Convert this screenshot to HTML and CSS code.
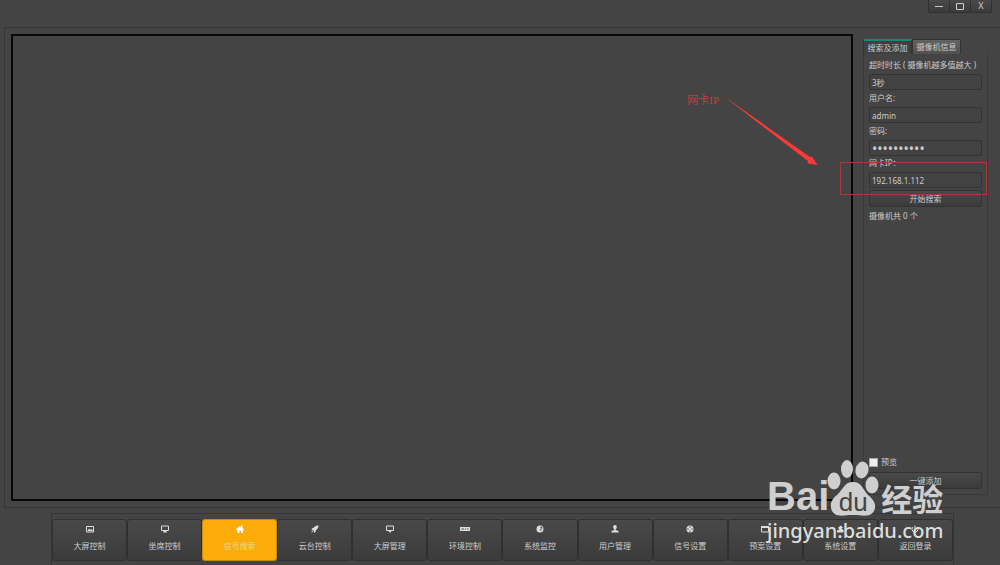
FILE: index.html
```html
<!DOCTYPE html>
<html lang="zh-CN">
<head>
    <meta charset="UTF-8">
    <title>信号搜索</title>
    <link rel="stylesheet" href="styles.css">
</head>
<body>

<header class="titlebar">
    <button type="button" aria-label="最小化"><svg viewBox="0 0 10 10"><path d="M1 5.500h8"/></svg></button>
    <button type="button" aria-label="最大化"><svg viewBox="0 0 10 10"><path d="M1.500 2.500h7v6h-7z"/></svg></button>
    <button type="button" aria-label="关闭">X</button>
</header>

<main class="frame">
    <section class="screen"></section>

    <aside class="panel">
        <div class="tabs" role="tablist">
            <button type="button" role="tab" class="tab active" aria-selected="true">搜索及添加</button>
            <button type="button" role="tab" class="tab" aria-selected="false">摄像机信息</button>
        </div>
        <form class="pane">
            <label for="timeout">超时时长 ( 摄像机越多值越大 )</label>
            <input type="text" id="timeout" value="3秒">

            <label for="username">用户名:</label>
            <input type="text" id="username" value="admin">

            <label for="password">密码:</label>
            <input type="password" id="password" value="admin12345">

            <div class="marked">
                <label for="ip">网卡IP：</label>
                <input type="text" id="ip" value="192.168.1.112">
            </div>

            <button type="button" class="btn">开始搜索</button>
            <p class="count">摄像机共 0 个</p>

            <label class="preview"><input type="checkbox">预览</label>
            <button type="button" class="btn">一键添加</button>
        </form>
    </aside>

    <div class="note">
        <span>网卡IP</span>
        <svg width="96" height="72" viewBox="0 0 96 72"><path d="M.5 0 L87 61 L89 60.500 L94.500 69 L84.500 67.500 L85.500 65.500z"/></svg>
    </div>
</main>

<nav class="menu">
    <button type="button">
        <svg viewBox="0 0 16 16"><path class="line" d="M1 3h14v11H1z"/><path d="M3 12l3-5 3 3 2-2 3 4z"/></svg>
        大屏控制
    </button>
    <button type="button">
        <svg viewBox="0 0 16 16"><path class="line" d="M1 2h14v9H1z"/><path d="M6 11h4v2h2v2H4v-2h2z"/></svg>
        坐席控制
    </button>
    <button type="button" class="current">
        <svg viewBox="0 0 16 16"><path d="M0 9l7-7 3 2V1h3v5l3 3v1h-2v6h-4v-4H7v4H3v-6H0z"/></svg>
        信号搜索
    </button>
    <button type="button">
        <svg viewBox="0 0 16 16"><path d="M15 1c-4 0-7 1-9 4L2 7l-1 3 3 0 2 3 0 3 3-2 1-4c3-2 5-5 5-9zM3 11l-3 4 4-1z"/></svg>
        云台控制
    </button>
    <button type="button">
        <svg viewBox="0 0 16 16"><path class="line" d="M1 2h14v9H1z"/><path d="M5 12h6l-3 4z"/></svg>
        大屏管理
    </button>
    <button type="button">
        <svg viewBox="0 0 16 16"><path fill-rule="evenodd" d="M-2 4h20v8H-2zM1 7v2h5V7zM8 7v2h2V7zM12 7v2h3V7z"/></svg>
        环境控制
    </button>
    <button type="button">
        <svg viewBox="0 0 16 16"><path fill-rule="evenodd" d="M8 1a7 7 0 1 0 0 14A7 7 0 1 0 8 1zM9 3c3 0 4 2 4 4H9zM7 9h5l-2 3z"/></svg>
        系统监控
    </button>
    <button type="button">
        <svg viewBox="0 0 16 16"><path d="M8 0c5 0 4 7 1.500 8v2l5.500 2v3H1v-3l5.500-2V8C4 7 3 0 8 0z"/></svg>
        用户管理
    </button>
    <button type="button">
        <svg viewBox="0 0 16 16"><path fill-rule="evenodd" d="M8 1a7 7 0 1 0 0 14A7 7 0 1 0 8 1zM6 3h4L8 6zM3 6l3 2-3 2zM13 6v4l-3-2zM8 10l2 3H6z"/></svg>
        信号设置
    </button>
    <button type="button">
        <svg viewBox="0 0 16 16"><path class="line" d="M1 3h14v11H1z"/><path d="M0 2h16v4H0z"/></svg>
        预案设置
    </button>
    <button type="button">
        <svg viewBox="0 0 16 16"><path d="M9 1l5 4-3 2 4 3v5H2v-4l5-2-3-3z"/></svg>
        系统设置
    </button>
    <button type="button">
        <svg viewBox="0 0 16 16"><path class="line" d="M4 4a6 6 0 1 0 8 0M8 1v7"/></svg>
        返回登录
    </button>
</nav>

<div class="watermark">
    <div class="brand">
        <span class="bai">Bai</span>
        <span class="paw">
            <svg viewBox="0 0 52 56">
                <ellipse cx="7" cy="21" rx="6.500" ry="8.500"/>
                <ellipse cx="20" cy="9" rx="6" ry="9"/>
                <ellipse cx="35" cy="10" rx="6.500" ry="8.500" transform="rotate(12 35 10)"/>
                <ellipse cx="45" cy="25" rx="6.500" ry="8.500"/>
                <path d="M26 22c9 0 10 8 15 13 6 5 9 10 6 16-4 7-12 4-21 4s-17 3-21-4c-3-7 0-12 5-16 6-5 7-13 16-13z"/>
            </svg>
            <span class="du">du</span>
        </span>
        <span class="jingyan">经验</span>
    </div>
    <div class="site">jingyan.baidu.com</div>
</div>

</body>
</html>
```

FILE: styles.css
```css
* {
    box-sizing: border-box;
}
body {
    margin: 0;
    height: 100vh;
    overflow: hidden;
    display: flex;
    flex-direction: column;
    position: relative;
    background: #444;
    color: #ccc;
    font-family: "Noto Sans", "Noto Sans CJK SC", sans-serif;
    font-size: 8px;
    line-height: 12px;
}
button, input {
    font: inherit;
    color: inherit;
    margin: 0;
}
button {
    padding: 0;
    border: 1px solid #333;
    border-radius: 2px;
    background: linear-gradient(#494949, #3b3b3b);
    white-space: nowrap;
}

/* Title bar */
.titlebar {
    display: flex;
    justify-content: flex-end;
    height: 27px;
    padding-right: 8px;
}
.titlebar button {
    width: 22px;
    height: 13px;
    margin-left: -1px;
    border-top: none;
    border-color: #303030;
    border-radius: 0 0 3px 3px;
    display: flex;
    align-items: center;
    justify-content: center;
    font-size: 9px;
}
.titlebar svg {
    width: 10px;
    height: 10px;
    fill: none;
    stroke: #ccc;
}

/* Main area */
.frame {
    flex: 1;
    min-height: 0;
    display: flex;
    gap: 10px;
    margin-left: 4px;
    padding: 6px 12px 6px 6px;
    border: 1px solid #363636;
    border-right: none;
    position: relative;
}
.screen {
    flex: 1;
    border: 2px solid #080808;
}
.panel {
    width: 125px;
    display: flex;
    flex-direction: column;
    padding: 5px 0 6px;
}
.tabs {
    display: flex;
    padding-right: 27px;
}
.tab {
    flex: 1;
    height: 15px;
    line-height: 12px;
    border-radius: 0;
    border-bottom: none;
    background: linear-gradient(#636363, #505050);
}
.tab.active {
    border-top: 2px solid #1d8575;
    background: #404040;
}
.pane {
    flex: 1;
    display: flex;
    flex-direction: column;
    padding: 4px 5px 5px;
    border: 1px solid #383838;
    border-top: none;
}
.pane label {
    display: block;
    height: 16px;
    line-height: 14px;
    white-space: nowrap;
}
.pane input[type="text"],
.pane input[type="password"] {
    display: block;
    width: 100%;
    height: 16px;
    padding: 0 2px;
    border: 1px solid #343434;
    border-radius: 2px;
    background: #424242;
}
.pane input + label {
    margin-top: 1px;
}
.pane input[type="password"] {
    font-size: 14px;
}
.btn {
    width: 100%;
    height: 17px;
    line-height: 14px;
    flex: none;
}
.marked {
    position: relative;
    margin-bottom: 2px;
}
.marked::after {
    content: "";
    position: absolute;
    top: 6px;
    left: -29px;
    right: -5px;
    height: 31px;
    border: 1px solid #a33b3b;
    pointer-events: none;
}
.count {
    margin: 3px 0 auto;
}
.pane .preview {
    display: flex;
    align-items: center;
    gap: 3px;
    margin-bottom: 2px;
}
.preview input {
    appearance: none;
    width: 9px;
    height: 9px;
    border: 1px solid #aaa;
    background: #eee;
}

/* Annotation drawn over the screen */
.note {
    position: absolute;
    top: 68px;
    right: 181px;
    display: flex;
    gap: 4px;
    color: #c83c3c;
    font-family: "Liberation Serif", "Noto Sans CJK SC", serif;
    font-size: 11px;
    line-height: 8px;
}
.note svg {
    fill: #ff3838;
}

/* Bottom menu */
.menu {
    display: flex;
    height: 52px;
    margin: 5px 46px 0 51px;
    padding-top: 5px;
    border: 1px solid #363636;
    border-bottom: none;
}
.menu button {
    flex: 1;
    height: 42px;
    display: flex;
    flex-direction: column;
    align-items: center;
    gap: 7px;
    padding-top: 5px;
    border-color: #303030;
    border-radius: 3px;
}
.menu button.current {
    background: #fcac08;
    border-color: #c98a0a;
    color: #e8d3a0;
}
.menu svg {
    width: 8px;
    height: 8px;
    fill: #ddd;
    overflow: visible;
}
.menu .current svg {
    fill: #fff;
}
.menu .line {
    fill: none;
    stroke: #ddd;
    stroke-width: 2;
}

/* Watermark */
.watermark {
    position: absolute;
    right: 54px;
    bottom: 19px;
    width: 179px;
    color: #cfcfcf;
    pointer-events: none;
}
.brand {
    display: flex;
    align-items: flex-end;
    font-weight: bold;
}
.bai {
    font-family: "Liberation Sans", sans-serif;
    font-size: 40px;
    line-height: 36px;
    padding-bottom: 2px;
}
.paw {
    position: relative;
    width: 52px;
    height: 56px;
    margin: 0 2px 0 -2px;
}
.paw svg {
    width: 52px;
    height: 56px;
    fill: #cfcfcf;
}
.du {
    position: absolute;
    left: 0;
    right: 0;
    bottom: 2px;
    text-align: center;
    color: #444;
    font-family: "Liberation Sans", sans-serif;
    font-size: 26px;
    font-weight: normal;
    line-height: 24px;
}
.jingyan {
    padding-bottom: 2px;
    font-family: "Noto Sans CJK SC", sans-serif;
    font-size: 31px;
    line-height: 32px;
}
.site {
    font-size: 20px;
    font-weight: 500;
    line-height: 30px;
    color: #ddd;
}
```
